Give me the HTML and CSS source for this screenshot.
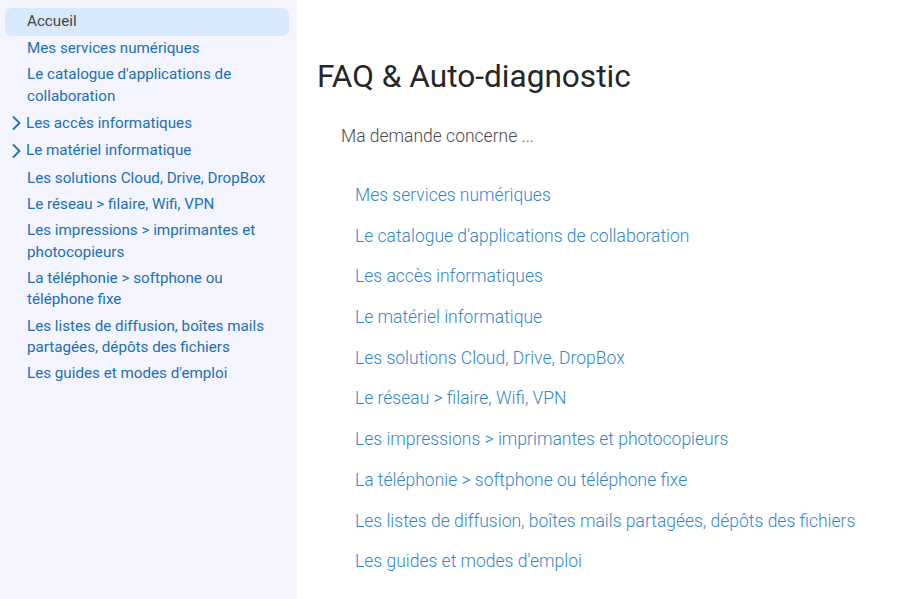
FILE: index.html
```html
<!DOCTYPE html>
<html lang="fr">
<head>
<meta charset="utf-8">
<title>FAQ & Auto-diagnostic</title>
<link rel="stylesheet" href="styles.css">
</head>
<body>
<nav class="sidebar">
  <ul class="nav">
    <li class="nav-item active"><a href="#">Accueil</a></li>
    <li class="nav-item"><a href="#">Mes services numériques</a></li>
    <li class="nav-item"><a href="#">Le catalogue d'applications de collaboration</a></li>
    <li class="nav-item has-children"><span class="chev"><svg width="10" height="16" viewBox="0 0 10 16"><path d="M2 1.5 L8.5 8 L2 14.5" fill="none" stroke="currentColor" stroke-width="1.8"/></svg></span><a href="#">Les accès informatiques</a></li>
    <li class="nav-item has-children"><span class="chev"><svg width="10" height="16" viewBox="0 0 10 16"><path d="M2 1.5 L8.5 8 L2 14.5" fill="none" stroke="currentColor" stroke-width="1.8"/></svg></span><a href="#">Le matériel informatique</a></li>
    <li class="nav-item"><a href="#">Les solutions Cloud, Drive, DropBox</a></li>
    <li class="nav-item"><a href="#">Le réseau &gt; filaire, Wifi, VPN</a></li>
    <li class="nav-item"><a href="#">Les impressions &gt; imprimantes et photocopieurs</a></li>
    <li class="nav-item"><a href="#">La téléphonie &gt; softphone ou téléphone fixe</a></li>
    <li class="nav-item"><a href="#">Les listes de diffusion, boîtes mails partagées, dépôts des fichiers</a></li>
    <li class="nav-item"><a href="#">Les guides et modes d'emploi</a></li>
  </ul>
</nav>
<main class="content">
  <h1 class="title">FAQ &amp; Auto-diagnostic</h1>
  <p class="lead">Ma demande concerne ...</p>
  <ul class="links">
    <li><a href="#">Mes services numériques</a></li>
    <li><a href="#">Le catalogue d'applications de collaboration</a></li>
    <li><a href="#">Les accès informatiques</a></li>
    <li><a href="#">Le matériel informatique</a></li>
    <li><a href="#">Les solutions Cloud, Drive, DropBox</a></li>
    <li><a href="#">Le réseau &gt; filaire, Wifi, VPN</a></li>
    <li><a href="#">Les impressions &gt; imprimantes et photocopieurs</a></li>
    <li><a href="#">La téléphonie &gt; softphone ou téléphone fixe</a></li>
    <li><a href="#">Les listes de diffusion, boîtes mails partagées, dépôts des fichiers</a></li>
    <li><a href="#">Les guides et modes d'emploi</a></li>
  </ul>
</main>
</body>
</html>
```
FILE: styles.css
```css
* { box-sizing: border-box; }
html, body { margin: 0; padding: 0; height: 100%; }
body {
  display: flex;
  font-family: Roboto, "Liberation Sans", sans-serif;
  background: #ffffff;
  overflow: hidden;
}
a { text-decoration: none; }
.sidebar {
  width: 297px;
  flex: none;
  background: #f4f4fe;
  min-height: 100vh;
  padding: 8px 8px 0 5px;
}
.nav {
  list-style: none;
  margin: 0;
  padding: 0;
}
.nav-item {
  display: flex;
  align-items: flex-start;
  padding: 2.4px 6px 2.4px 22px;
  font-size: 15.2px;
  line-height: 21.5px;
  border-radius: 7px;
}
.nav-item a { color: #1b6fb5; }
.nav-item.active {
  background: #d9e9fd;
  padding-top: 3px;
  padding-bottom: 3px;
}
.nav-item.active a { color: #444444; }
.nav-item.has-children {
  padding-left: 5px;
  align-items: center;
}
.chev {
  color: #1b6fb5;
  width: 16px;
  flex: none;
  display: flex;
  align-items: center;
  height: 23px;
  padding-left: 1px;
}
.chev svg { display: block; }
.content {
  flex: 1;
  padding: 58px 20px 0 20px;
}
.title {
  margin: 0;
  font-size: 31.6px;
  font-weight: 400;
  line-height: 38px;
  color: #262626;
}
.lead {
  margin: 28px 0 0 24px;
  font-size: 17.5px;
  font-weight: 300;
  line-height: 24px;
  color: #4a4a4a;
}
.links {
  list-style: none;
  margin: 35px 0 0 38px;
  padding: 0;
  display: flex;
  flex-direction: column;
  gap: 16.7px;
}
.links li {
  font-size: 17.5px;
  font-weight: 300;
  line-height: 24px;
}
.links a { color: #2f86d0; }
```
